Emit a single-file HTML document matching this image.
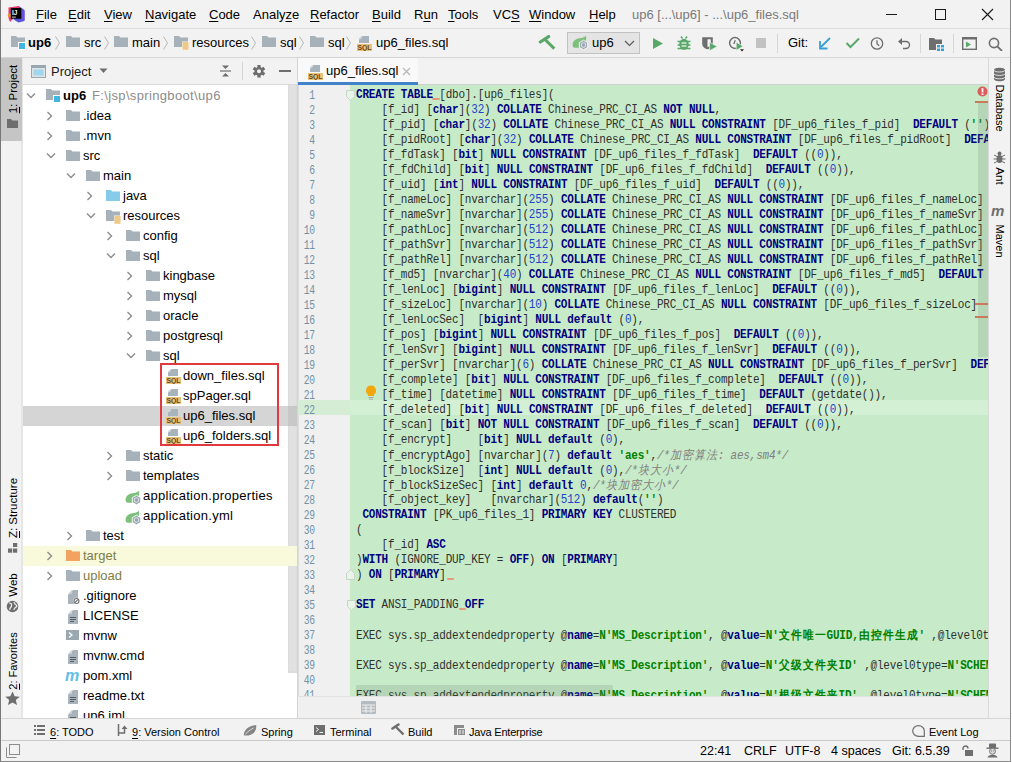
<!DOCTYPE html><html><head><meta charset="utf-8"><style>
*{margin:0;padding:0;box-sizing:border-box}
html,body{width:1012px;height:762px;overflow:hidden;background:#f2f2f2}
body{position:relative;font-family:"Liberation Sans",sans-serif}
.t{position:absolute;white-space:pre;line-height:16px}
.code{position:absolute;left:357px;white-space:pre;font-family:"Liberation Mono",monospace;font-size:11px;letter-spacing:-0.2px;line-height:15px;color:#303030;height:15px;transform:scaleY(1.12);transform-origin:0 11px}
.k{color:#000080;font-weight:bold}
.n{color:#2244cc}
.s{color:#008000;font-weight:bold}
.c{color:#808080;font-style:italic}
.cj{display:inline-block;width:12px;letter-spacing:0;font-family:"Liberation Sans",sans-serif;font-size:11px;text-align:center}
.ln{position:absolute;width:20px;text-align:right;font-family:"Liberation Mono",monospace;font-size:11px;letter-spacing:-0.2px;line-height:15px;color:#7092a6;left:295px;transform:scale(0.88,1.12);transform-origin:100% 11px}
u{text-decoration:underline;text-underline-offset:2px}
</style></head><body>
<div style="position:absolute;left:0px;top:0px;width:1px;height:762px;background:#777777;"></div>
<div style="position:absolute;left:1010px;top:0px;width:1px;height:762px;background:#8a8a8a;"></div>
<div style="position:absolute;left:1011px;top:0px;width:1px;height:762px;background:#ffffff;"></div>
<div style="position:absolute;left:0px;top:761px;width:1011px;height:1px;background:#8a8a8a;"></div>
<svg style="position:absolute;left:7px;top:5px;" width="18" height="18" viewBox="0 0 18 18"><path d="M1.5 2.5L12 1l2.5 4L3 17l-1.5-4z" fill="#e7366a"/><path d="M12.5 1.5L17.5 5v11l-6 1.5-5-3z" fill="#5056db"/><path d="M14 4l3.5 2v9l-3 1z" fill="#6a4fe0"/><circle cx="2.8" cy="10.5" r="2" fill="#f38b30"/><rect x="3.8" y="3" width="10.5" height="10.7" fill="#000"/><text x="5" y="9.8" font-family="Liberation Sans" font-weight="bold" font-size="6.5" fill="#fff">IJ</text><rect x="5" y="11.6" width="3.8" height="1" fill="#cfcfcf"/></svg>
<div class="t" style="left:36px;top:7px;font-size:13px;color:#000;font-weight:normal;"><u>F</u>ile</div>
<div class="t" style="left:68px;top:7px;font-size:13px;color:#000;font-weight:normal;"><u>E</u>dit</div>
<div class="t" style="left:104px;top:7px;font-size:13px;color:#000;font-weight:normal;"><u>V</u>iew</div>
<div class="t" style="left:145px;top:7px;font-size:13px;color:#000;font-weight:normal;"><u>N</u>avigate</div>
<div class="t" style="left:209px;top:7px;font-size:13px;color:#000;font-weight:normal;"><u>C</u>ode</div>
<div class="t" style="left:253px;top:7px;font-size:13px;color:#000;font-weight:normal;">Analy<u>z</u>e</div>
<div class="t" style="left:310px;top:7px;font-size:13px;color:#000;font-weight:normal;"><u>R</u>efactor</div>
<div class="t" style="left:372px;top:7px;font-size:13px;color:#000;font-weight:normal;"><u>B</u>uild</div>
<div class="t" style="left:414px;top:7px;font-size:13px;color:#000;font-weight:normal;">R<u>u</u>n</div>
<div class="t" style="left:448px;top:7px;font-size:13px;color:#000;font-weight:normal;"><u>T</u>ools</div>
<div class="t" style="left:493px;top:7px;font-size:13px;color:#000;font-weight:normal;">VC<u>S</u></div>
<div class="t" style="left:529px;top:7px;font-size:13px;color:#000;font-weight:normal;"><u>W</u>indow</div>
<div class="t" style="left:589px;top:7px;font-size:13px;color:#000;font-weight:normal;"><u>H</u>elp</div>
<div class="t" style="left:632px;top:7px;font-size:13px;color:#7a7a7a;font-weight:normal;">up6 [...\up6] - ...\up6_files.sql</div>
<div style="position:absolute;left:886px;top:14px;width:11px;height:1px;background:#1a1a1a;"></div>
<div style="position:absolute;left:935px;top:9px;width:11px;height:11px;border:1px solid #1a1a1a"></div>
<svg style="position:absolute;left:981px;top:8px;" width="13" height="13" viewBox="0 0 13 13"><path d="M1 1l11 11M12 1L1 12" stroke="#1a1a1a" stroke-width="1.1"/></svg>
<div style="position:absolute;left:1px;top:28px;width:1009px;height:1px;background:#dcdcdc;"></div>
<svg style="position:absolute;left:10px;top:34px;" width="16" height="16" viewBox="0 0 16 16"><path d="M1 2h5l1.5 1.5H15V13H1z" fill="#a7b1b9"/><rect x="8.5" y="8.5" width="7" height="7" fill="#40b6e0" stroke="#fff" stroke-width="1"/></svg>
<div class="t" style="left:28px;top:35px;font-size:13px;color:#000;font-weight:bold;">up6</div>
<svg style="position:absolute;left:53.5px;top:35px;" width="7" height="16" viewBox="0 0 7 16"><path d="M1.5 1.5l4 6.5-4 6.5" stroke="#b8b8b8" stroke-width="1" fill="none"/></svg>
<svg style="position:absolute;left:65px;top:34px;" width="16" height="14" viewBox="0 0 16 14"><path d="M1 2h5l1.5 1.5H15V13H1z" fill="#a7b1b9"/></svg>
<div class="t" style="left:84px;top:35px;font-size:13px;color:#000;font-weight:normal;">src</div>
<svg style="position:absolute;left:102.5px;top:35px;" width="7" height="16" viewBox="0 0 7 16"><path d="M1.5 1.5l4 6.5-4 6.5" stroke="#b8b8b8" stroke-width="1" fill="none"/></svg>
<svg style="position:absolute;left:113px;top:34px;" width="16" height="14" viewBox="0 0 16 14"><path d="M1 2h5l1.5 1.5H15V13H1z" fill="#a7b1b9"/></svg>
<div class="t" style="left:132px;top:35px;font-size:13px;color:#000;font-weight:normal;">main</div>
<svg style="position:absolute;left:161.5px;top:35px;" width="7" height="16" viewBox="0 0 7 16"><path d="M1.5 1.5l4 6.5-4 6.5" stroke="#b8b8b8" stroke-width="1" fill="none"/></svg>
<svg style="position:absolute;left:173px;top:34px;" width="16" height="16" viewBox="0 0 16 16"><path d="M1 2h5l1.5 1.5H15V13H1z" fill="#a7b1b9"/><rect x="9" y="7.5" width="7" height="8.5" fill="#fff" fill-opacity="0.9"/><rect x="9.5" y="8" width="6" height="7.5" fill="#f3dcae"/><path d="M9.5 9h6M9.5 11h6M9.5 13h6M9.5 15h6" stroke="#e6b866" stroke-width="1"/></svg>
<div class="t" style="left:192px;top:35px;font-size:13px;color:#000;font-weight:normal;">resources</div>
<svg style="position:absolute;left:249.5px;top:35px;" width="7" height="16" viewBox="0 0 7 16"><path d="M1.5 1.5l4 6.5-4 6.5" stroke="#b8b8b8" stroke-width="1" fill="none"/></svg>
<svg style="position:absolute;left:261px;top:34px;" width="16" height="14" viewBox="0 0 16 14"><path d="M1 2h5l1.5 1.5H15V13H1z" fill="#a7b1b9"/></svg>
<div class="t" style="left:280px;top:35px;font-size:13px;color:#000;font-weight:normal;">sql</div>
<svg style="position:absolute;left:297.5px;top:35px;" width="7" height="16" viewBox="0 0 7 16"><path d="M1.5 1.5l4 6.5-4 6.5" stroke="#b8b8b8" stroke-width="1" fill="none"/></svg>
<svg style="position:absolute;left:309px;top:34px;" width="16" height="14" viewBox="0 0 16 14"><path d="M1 2h5l1.5 1.5H15V13H1z" fill="#a7b1b9"/></svg>
<div class="t" style="left:328px;top:35px;font-size:13px;color:#000;font-weight:normal;">sql</div>
<svg style="position:absolute;left:344.5px;top:35px;" width="7" height="16" viewBox="0 0 7 16"><path d="M1.5 1.5l4 6.5-4 6.5" stroke="#b8b8b8" stroke-width="1" fill="none"/></svg>
<svg style="position:absolute;left:357px;top:35px;" width="16" height="16" viewBox="0 0 16 16"><path d="M5.5 1H12v7H2V4.5z" fill="#a8b4bd"/><path d="M4.5 1v3H1.5z" fill="#cfd6db"/><rect x="0" y="9" width="15" height="7" fill="#ebc077"/><text x="7.5" y="15.3" font-family="Liberation Sans" font-size="6.8" font-weight="bold" text-anchor="middle" fill="#5e4a22">SQL</text></svg>
<div class="t" style="left:376px;top:35px;font-size:13px;color:#000;font-weight:normal;">up6_files.sql</div>
<svg style="position:absolute;left:538px;top:35px;" width="18" height="16" viewBox="0 0 18 16"><path d="M2.3 7L10.6 1.6" stroke="#59a869" stroke-width="3.2" stroke-linecap="round"/><path d="M7 4.5L16.3 13.6" stroke="#59a869" stroke-width="3"/></svg>
<div style="position:absolute;left:567px;top:32px;width:73px;height:22px;background:#e4e4e4;border:1px solid #c2c2c2"></div>
<svg style="position:absolute;left:572px;top:35px;" width="18" height="16" viewBox="0 0 18 16"><path d="M0.5 9.5C1 5 5 3.5 9 3c2.5-.3 4-1.2 5-2.5.5 3 .3 6-1.5 8L8 12.5c-3 .5-5 .5-7-0.5z" fill="#7cc07c"/><path d="M11.5 5.2l4.2 2.4v4.8l-4.2 2.4-4.2-2.4V7.6z" fill="#9aa7b0" stroke="#fff" stroke-width="0.9"/><circle cx="11.5" cy="10" r="2.3" fill="none" stroke="#e4e8eb" stroke-width="1"/></svg>
<div class="t" style="left:592px;top:35px;font-size:13px;color:#000;font-weight:normal;">up6</div>
<svg style="position:absolute;left:624px;top:40px;" width="11" height="7" viewBox="0 0 11 7"><path d="M1 1l4.5 4.5L10 1" stroke="#555" stroke-width="1.1" fill="none"/></svg>
<svg style="position:absolute;left:652px;top:37px;" width="12" height="13" viewBox="0 0 12 13"><path d="M1 1l10 5.5L1 12z" fill="#59a869"/></svg>
<svg style="position:absolute;left:677px;top:36px;" width="14" height="15" viewBox="0 0 14 15"><path d="M4 0.5l1.5 2M10 0.5L8.5 2.5M0.5 5.5h13M0.5 9h13M0.5 12.5h13" stroke="#59a869" stroke-width="1.5"/><ellipse cx="7" cy="8.3" rx="4.8" ry="5.5" fill="#59a869"/><path d="M4.5 7h5M4.5 10h5" stroke="#d8ecd8" stroke-width="1.5"/></svg>
<svg style="position:absolute;left:701px;top:36px;" width="18" height="16" viewBox="0 0 18 16"><path d="M1.2 1.2h10.6v6.3c0 3.2-2.3 4.9-5.3 5.8-3-0.9-5.3-2.6-5.3-5.8z" fill="#6e6e6e"/><path d="M6.5 3.2h3.3v4.5c0 1.2-.7 2.6-3.3 3.6z" fill="#f2f2f2"/><path d="M8.6 6.2l7.6 4.3-7.6 4.3z" fill="#59a869" stroke="#f2f2f2" stroke-width="0.7"/></svg>
<svg style="position:absolute;left:728px;top:36px;" width="17" height="17" viewBox="0 0 17 17"><circle cx="7" cy="7" r="5.4" fill="none" stroke="#6e6e6e" stroke-width="1.5"/><path d="M7.3 4.2L5.8 8" stroke="#6e6e6e" stroke-width="1.3"/><path d="M8.2 6.2l7 4-7 4.2z" fill="#59a869" stroke="#f2f2f2" stroke-width="0.7"/><path d="M12 13.2h4l-2 2.3z" fill="#222"/></svg>
<div style="position:absolute;left:756px;top:38px;width:10px;height:10px;background:#c2c2c2;"></div>
<div style="position:absolute;left:777px;top:34px;width:1px;height:19px;background:#d6d6d6;"></div>
<div class="t" style="left:788px;top:35px;font-size:13px;color:#000;font-weight:normal;">Git:</div>
<svg style="position:absolute;left:818px;top:36px;" width="14" height="14" viewBox="0 0 14 14"><path d="M12 2L3 11" stroke="#389fd6" stroke-width="1.8"/><path d="M2 5v7.5h7.5" stroke="#389fd6" stroke-width="1.8" fill="none"/></svg>
<svg style="position:absolute;left:845px;top:37px;" width="15" height="12" viewBox="0 0 15 12"><path d="M1.5 6l4 4L14 1.5" stroke="#59a869" stroke-width="2" fill="none"/></svg>
<svg style="position:absolute;left:870px;top:37px;" width="15" height="13" viewBox="0 0 15 13"><circle cx="7" cy="6.5" r="5.7" fill="none" stroke="#6e6e6e" stroke-width="1.3"/><path d="M7 3.3v3.5l2.2 2" stroke="#6e6e6e" stroke-width="1.3" fill="none"/></svg>
<svg style="position:absolute;left:897px;top:37px;" width="15" height="13" viewBox="0 0 15 13"><path d="M3 4.5h6a3.5 3.5 0 0 1 0 7H6" stroke="#6e6e6e" stroke-width="1.4" fill="none"/><path d="M1 4.5L5 1v7z" fill="#6e6e6e"/></svg>
<div style="position:absolute;left:920px;top:34px;width:1px;height:19px;background:#d6d6d6;"></div>
<svg style="position:absolute;left:929px;top:37px;" width="16" height="14" viewBox="0 0 16 14"><path d="M0 1h5l1.5 1.5H13V13H0z" fill="#6e6e6e"/><rect x="7" y="7" width="9" height="7" fill="#f2f2f2"/><rect x="8" y="8" width="3" height="2.5" fill="#389fd6"/><rect x="12" y="8" width="3" height="2.5" fill="#389fd6"/><rect x="8" y="11.5" width="3" height="2.5" fill="#389fd6"/><rect x="12" y="11.5" width="3" height="2.5" fill="#389fd6"/></svg>
<div style="position:absolute;left:953px;top:34px;width:1px;height:19px;background:#d6d6d6;"></div>
<svg style="position:absolute;left:962px;top:37px;" width="15" height="13" viewBox="0 0 15 13"><rect x="0.7" y="0.7" width="13.6" height="11.6" fill="none" stroke="#6e6e6e" stroke-width="1.4"/><rect x="0" y="0" width="15" height="2.5" fill="#6e6e6e"/><path d="M4 4.5l5 3-5 3z" fill="#59a869"/></svg>
<svg style="position:absolute;left:988px;top:37px;" width="15" height="14" viewBox="0 0 15 14"><circle cx="6" cy="6" r="4.6" fill="none" stroke="#6e6e6e" stroke-width="1.6"/><path d="M9.3 9.3L14 14" stroke="#6e6e6e" stroke-width="1.8"/></svg>
<div style="position:absolute;left:1px;top:57px;width:1009px;height:1px;background:#d4d4d4;"></div>
<div style="position:absolute;left:1px;top:58px;width:21px;height:660px;background:#f2f2f2;"></div>
<div style="position:absolute;left:21px;top:58px;width:2px;height:660px;background:#e6e6e6;"></div>
<div style="position:absolute;left:1px;top:58px;width:21px;height:83px;background:#c5c5c5;"></div>
<div style="position:absolute;left:13px;top:89px;width:0;height:0"><div style="position:absolute;left:0;top:0;transform:translate(-50%,-50%) rotate(-90deg);white-space:pre;font-size:11.5px;line-height:14px;color:#000"><u>1</u>: Project</div></div>
<svg style="position:absolute;left:6px;top:118px;" width="13" height="11" viewBox="0 0 13 11"><path d="M1 1h4l1.5 1.5H12V10H1z" fill="#6e6e6e"/></svg>
<div style="position:absolute;left:13px;top:508px;width:0;height:0"><div style="position:absolute;left:0;top:0;transform:translate(-50%,-50%) rotate(-90deg);white-space:pre;font-size:11.5px;line-height:14px;color:#000"><u>Z</u>: Structure</div></div>
<svg style="position:absolute;left:7px;top:542px;" width="11" height="11" viewBox="0 0 11 11"><rect x="6" y="1" width="4.2" height="4" fill="#6e6e6e"/><rect x="1" y="6.5" width="4.2" height="4.2" fill="#6e6e6e"/><rect x="6" y="6.5" width="4.2" height="4.2" fill="#6e6e6e"/></svg>
<div style="position:absolute;left:13px;top:585px;width:0;height:0"><div style="position:absolute;left:0;top:0;transform:translate(-50%,-50%) rotate(-90deg);white-space:pre;font-size:11.5px;line-height:14px;color:#000">Web</div></div>
<svg style="position:absolute;left:6px;top:600px;" width="13" height="13" viewBox="0 0 13 13"><circle cx="6.5" cy="6.5" r="5.8" fill="#6e6e6e"/><path d="M3 3c2 0 3 1 2.5 3S3 8 4 10M8 2c0 2 2 2 3 4-1 2-3 1-3 4" stroke="#f0f0f0" stroke-width="1.2" fill="none"/></svg>
<div style="position:absolute;left:13px;top:661px;width:0;height:0"><div style="position:absolute;left:0;top:0;transform:translate(-50%,-50%) rotate(-90deg);white-space:pre;font-size:11px;line-height:14px;color:#000"><u>2</u>: Favorites</div></div>
<svg style="position:absolute;left:5px;top:691px;" width="15" height="15" viewBox="0 0 15 15"><path d="M7.5 0.5l2.1 4.7 5.1.5-3.9 3.4 1.2 5-4.5-2.7-4.5 2.7 1.2-5L0.3 5.7l5.1-.5z" fill="#6e6e6e"/></svg>
<div style="position:absolute;left:23px;top:58px;width:274px;height:26px;background:#f2f2f2;"></div>
<div style="position:absolute;left:23px;top:84px;width:274px;height:1px;background:#dadada;"></div>
<svg style="position:absolute;left:31px;top:65px;" width="15" height="13" viewBox="0 0 15 13"><rect x="0.5" y="0.5" width="14" height="12" fill="#dfe3e6" stroke="#9aa7b0"/><rect x="0.5" y="0.5" width="14" height="2.5" fill="#9aa7b0"/><rect x="2.5" y="4.5" width="10" height="6" fill="#9fd7ee"/></svg>
<div class="t" style="left:51px;top:64px;font-size:13px;color:#1a1a1a;font-weight:normal;">Project</div>
<svg style="position:absolute;left:99px;top:68px;" width="9" height="6" viewBox="0 0 9 6"><path d="M0.5 0.5h8L4.5 5z" fill="#6e6e6e"/></svg>
<svg style="position:absolute;left:219px;top:64px;" width="13" height="14" viewBox="0 0 13 14"><path d="M1 7h11" stroke="#6e6e6e" stroke-width="1.2"/><path d="M3 1.5h7L6.5 5z M3 12.5h7L6.5 9z" fill="#6e6e6e"/></svg>
<div style="position:absolute;left:242px;top:62px;width:1px;height:18px;background:#d6d6d6;"></div>
<svg style="position:absolute;left:252px;top:64px;" width="14" height="14" viewBox="0 0 14 14"><g transform="translate(7 7.3)"><circle r="4.4" fill="#6e6e6e"/><rect x="-1.6" y="-6.3" width="3.2" height="3" fill="#6e6e6e" transform="rotate(0)"/><rect x="-1.6" y="-6.3" width="3.2" height="3" fill="#6e6e6e" transform="rotate(60)"/><rect x="-1.6" y="-6.3" width="3.2" height="3" fill="#6e6e6e" transform="rotate(120)"/><rect x="-1.6" y="-6.3" width="3.2" height="3" fill="#6e6e6e" transform="rotate(180)"/><rect x="-1.6" y="-6.3" width="3.2" height="3" fill="#6e6e6e" transform="rotate(240)"/><rect x="-1.6" y="-6.3" width="3.2" height="3" fill="#6e6e6e" transform="rotate(300)"/><circle r="2" fill="#f2f2f2"/></g></svg>
<div style="position:absolute;left:279px;top:70px;width:12px;height:2px;background:#6e6e6e;"></div>
<div style="position:absolute;left:23px;top:85px;width:274px;height:633px;background:#ffffff;"></div>
<div style="position:absolute;left:288px;top:85px;width:9px;height:588px;background:#dcdcdc;"></div>
<div style="position:absolute;left:289px;top:85px;width:7px;height:586px;background:#e1e1e1;"></div>
<div style="position:absolute;left:297px;top:58px;width:1px;height:660px;background:#d4d4d4;"></div>
<div style="position:absolute;left:23px;top:406px;width:265px;height:20px;background:#d5d5d5;"></div>
<div style="position:absolute;left:288px;top:406px;width:9px;height:20px;background:#c8c8c8;"></div>
<div style="position:absolute;left:23px;top:546px;width:274px;height:20px;background:#f9f9dc;"></div>
<div style="position:absolute;left:23px;top:85px;width:265px;height:633px;overflow:hidden">
<svg style="position:absolute;left:2px;top:6px;" width="12" height="10" viewBox="0 0 12 10"><path d="M2 2.5l4 4 4-4" stroke="#8c8c8c" stroke-width="1.4" fill="none"/></svg>
<svg style="position:absolute;left:22px;top:2px;" width="16" height="16" viewBox="0 0 16 16"><path d="M1 2h5l1.5 1.5H15V13H1z" fill="#a7b1b9"/><rect x="8.5" y="8.5" width="7" height="7" fill="#40b6e0" stroke="#fff" stroke-width="1"/></svg>
<div class="t" style="left:40px;top:3px;font-size:13px;color:#000;font-weight:bold;">up6</div>
<div class="t" style="left:69px;top:3px;font-size:13px;color:#8c8c8c;font-weight:normal;letter-spacing:0.35px">F:\jsp\springboot\up6</div>
<svg style="position:absolute;left:22px;top:25px;" width="10" height="12" viewBox="0 0 10 12"><path d="M2.5 2l4 4-4 4" stroke="#8c8c8c" stroke-width="1.4" fill="none"/></svg>
<svg style="position:absolute;left:42px;top:23px;" width="16" height="14" viewBox="0 0 16 14"><path d="M1 2h5l1.5 1.5H15V13H1z" fill="#a7b1b9"/></svg>
<div class="t" style="left:60px;top:23px;font-size:13px;color:#000;font-weight:normal;">.idea</div>
<svg style="position:absolute;left:22px;top:45px;" width="10" height="12" viewBox="0 0 10 12"><path d="M2.5 2l4 4-4 4" stroke="#8c8c8c" stroke-width="1.4" fill="none"/></svg>
<svg style="position:absolute;left:42px;top:43px;" width="16" height="14" viewBox="0 0 16 14"><path d="M1 2h5l1.5 1.5H15V13H1z" fill="#a7b1b9"/></svg>
<div class="t" style="left:60px;top:43px;font-size:13px;color:#000;font-weight:normal;">.mvn</div>
<svg style="position:absolute;left:22px;top:66px;" width="12" height="10" viewBox="0 0 12 10"><path d="M2 2.5l4 4 4-4" stroke="#8c8c8c" stroke-width="1.4" fill="none"/></svg>
<svg style="position:absolute;left:42px;top:63px;" width="16" height="14" viewBox="0 0 16 14"><path d="M1 2h5l1.5 1.5H15V13H1z" fill="#a7b1b9"/></svg>
<div class="t" style="left:60px;top:63px;font-size:13px;color:#000;font-weight:normal;">src</div>
<svg style="position:absolute;left:42px;top:86px;" width="12" height="10" viewBox="0 0 12 10"><path d="M2 2.5l4 4 4-4" stroke="#8c8c8c" stroke-width="1.4" fill="none"/></svg>
<svg style="position:absolute;left:62px;top:83px;" width="16" height="14" viewBox="0 0 16 14"><path d="M1 2h5l1.5 1.5H15V13H1z" fill="#a7b1b9"/></svg>
<div class="t" style="left:80px;top:83px;font-size:13px;color:#000;font-weight:normal;">main</div>
<svg style="position:absolute;left:62px;top:105px;" width="10" height="12" viewBox="0 0 10 12"><path d="M2.5 2l4 4-4 4" stroke="#8c8c8c" stroke-width="1.4" fill="none"/></svg>
<svg style="position:absolute;left:82px;top:103px;" width="16" height="14" viewBox="0 0 16 14"><path d="M1 2h5l1.5 1.5H15V13H1z" fill="#86cbe9"/></svg>
<div class="t" style="left:100px;top:103px;font-size:13px;color:#000;font-weight:normal;">java</div>
<svg style="position:absolute;left:62px;top:126px;" width="12" height="10" viewBox="0 0 12 10"><path d="M2 2.5l4 4 4-4" stroke="#8c8c8c" stroke-width="1.4" fill="none"/></svg>
<svg style="position:absolute;left:82px;top:123px;" width="16" height="16" viewBox="0 0 16 16"><path d="M1 2h5l1.5 1.5H15V13H1z" fill="#a7b1b9"/><rect x="9" y="7.5" width="7" height="8.5" fill="#fff" fill-opacity="0.9"/><rect x="9.5" y="8" width="6" height="7.5" fill="#f3dcae"/><path d="M9.5 9h6M9.5 11h6M9.5 13h6M9.5 15h6" stroke="#e6b866" stroke-width="1"/></svg>
<div class="t" style="left:100px;top:123px;font-size:13px;color:#000;font-weight:normal;">resources</div>
<svg style="position:absolute;left:82px;top:145px;" width="10" height="12" viewBox="0 0 10 12"><path d="M2.5 2l4 4-4 4" stroke="#8c8c8c" stroke-width="1.4" fill="none"/></svg>
<svg style="position:absolute;left:102px;top:143px;" width="16" height="14" viewBox="0 0 16 14"><path d="M1 2h5l1.5 1.5H15V13H1z" fill="#a7b1b9"/></svg>
<div class="t" style="left:120px;top:143px;font-size:13px;color:#000;font-weight:normal;">config</div>
<svg style="position:absolute;left:82px;top:166px;" width="12" height="10" viewBox="0 0 12 10"><path d="M2 2.5l4 4 4-4" stroke="#8c8c8c" stroke-width="1.4" fill="none"/></svg>
<svg style="position:absolute;left:102px;top:163px;" width="16" height="14" viewBox="0 0 16 14"><path d="M1 2h5l1.5 1.5H15V13H1z" fill="#a7b1b9"/></svg>
<div class="t" style="left:120px;top:163px;font-size:13px;color:#000;font-weight:normal;">sql</div>
<svg style="position:absolute;left:102px;top:185px;" width="10" height="12" viewBox="0 0 10 12"><path d="M2.5 2l4 4-4 4" stroke="#8c8c8c" stroke-width="1.4" fill="none"/></svg>
<svg style="position:absolute;left:122px;top:183px;" width="16" height="14" viewBox="0 0 16 14"><path d="M1 2h5l1.5 1.5H15V13H1z" fill="#a7b1b9"/></svg>
<div class="t" style="left:140px;top:183px;font-size:13px;color:#000;font-weight:normal;">kingbase</div>
<svg style="position:absolute;left:102px;top:205px;" width="10" height="12" viewBox="0 0 10 12"><path d="M2.5 2l4 4-4 4" stroke="#8c8c8c" stroke-width="1.4" fill="none"/></svg>
<svg style="position:absolute;left:122px;top:203px;" width="16" height="14" viewBox="0 0 16 14"><path d="M1 2h5l1.5 1.5H15V13H1z" fill="#a7b1b9"/></svg>
<div class="t" style="left:140px;top:203px;font-size:13px;color:#000;font-weight:normal;">mysql</div>
<svg style="position:absolute;left:102px;top:225px;" width="10" height="12" viewBox="0 0 10 12"><path d="M2.5 2l4 4-4 4" stroke="#8c8c8c" stroke-width="1.4" fill="none"/></svg>
<svg style="position:absolute;left:122px;top:223px;" width="16" height="14" viewBox="0 0 16 14"><path d="M1 2h5l1.5 1.5H15V13H1z" fill="#a7b1b9"/></svg>
<div class="t" style="left:140px;top:223px;font-size:13px;color:#000;font-weight:normal;">oracle</div>
<svg style="position:absolute;left:102px;top:245px;" width="10" height="12" viewBox="0 0 10 12"><path d="M2.5 2l4 4-4 4" stroke="#8c8c8c" stroke-width="1.4" fill="none"/></svg>
<svg style="position:absolute;left:122px;top:243px;" width="16" height="14" viewBox="0 0 16 14"><path d="M1 2h5l1.5 1.5H15V13H1z" fill="#a7b1b9"/></svg>
<div class="t" style="left:140px;top:243px;font-size:13px;color:#000;font-weight:normal;">postgresql</div>
<svg style="position:absolute;left:102px;top:266px;" width="12" height="10" viewBox="0 0 12 10"><path d="M2 2.5l4 4 4-4" stroke="#8c8c8c" stroke-width="1.4" fill="none"/></svg>
<svg style="position:absolute;left:122px;top:263px;" width="16" height="14" viewBox="0 0 16 14"><path d="M1 2h5l1.5 1.5H15V13H1z" fill="#a7b1b9"/></svg>
<div class="t" style="left:140px;top:263px;font-size:13px;color:#000;font-weight:normal;">sql</div>
<svg style="position:absolute;left:143px;top:283px;" width="16" height="16" viewBox="0 0 16 16"><path d="M5.5 1H12v7H2V4.5z" fill="#a8b4bd"/><path d="M4.5 1v3H1.5z" fill="#cfd6db"/><rect x="0" y="9" width="15" height="7" fill="#ebc077"/><text x="7.5" y="15.3" font-family="Liberation Sans" font-size="6.8" font-weight="bold" text-anchor="middle" fill="#5e4a22">SQL</text></svg>
<div class="t" style="left:160px;top:283px;font-size:13px;color:#000;font-weight:normal;">down_files.sql</div>
<svg style="position:absolute;left:143px;top:303px;" width="16" height="16" viewBox="0 0 16 16"><path d="M5.5 1H12v7H2V4.5z" fill="#a8b4bd"/><path d="M4.5 1v3H1.5z" fill="#cfd6db"/><rect x="0" y="9" width="15" height="7" fill="#ebc077"/><text x="7.5" y="15.3" font-family="Liberation Sans" font-size="6.8" font-weight="bold" text-anchor="middle" fill="#5e4a22">SQL</text></svg>
<div class="t" style="left:160px;top:303px;font-size:13px;color:#000;font-weight:normal;">spPager.sql</div>
<svg style="position:absolute;left:143px;top:323px;" width="16" height="16" viewBox="0 0 16 16"><path d="M5.5 1H12v7H2V4.5z" fill="#a8b4bd"/><path d="M4.5 1v3H1.5z" fill="#cfd6db"/><rect x="0" y="9" width="15" height="7" fill="#ebc077"/><text x="7.5" y="15.3" font-family="Liberation Sans" font-size="6.8" font-weight="bold" text-anchor="middle" fill="#5e4a22">SQL</text></svg>
<div class="t" style="left:160px;top:323px;font-size:13px;color:#000;font-weight:normal;">up6_files.sql</div>
<svg style="position:absolute;left:143px;top:343px;" width="16" height="16" viewBox="0 0 16 16"><path d="M5.5 1H12v7H2V4.5z" fill="#a8b4bd"/><path d="M4.5 1v3H1.5z" fill="#cfd6db"/><rect x="0" y="9" width="15" height="7" fill="#ebc077"/><text x="7.5" y="15.3" font-family="Liberation Sans" font-size="6.8" font-weight="bold" text-anchor="middle" fill="#5e4a22">SQL</text></svg>
<div class="t" style="left:160px;top:343px;font-size:13px;color:#000;font-weight:normal;">up6_folders.sql</div>
<svg style="position:absolute;left:82px;top:365px;" width="10" height="12" viewBox="0 0 10 12"><path d="M2.5 2l4 4-4 4" stroke="#8c8c8c" stroke-width="1.4" fill="none"/></svg>
<svg style="position:absolute;left:102px;top:363px;" width="16" height="14" viewBox="0 0 16 14"><path d="M1 2h5l1.5 1.5H15V13H1z" fill="#a7b1b9"/></svg>
<div class="t" style="left:120px;top:363px;font-size:13px;color:#000;font-weight:normal;">static</div>
<svg style="position:absolute;left:82px;top:385px;" width="10" height="12" viewBox="0 0 10 12"><path d="M2.5 2l4 4-4 4" stroke="#8c8c8c" stroke-width="1.4" fill="none"/></svg>
<svg style="position:absolute;left:102px;top:383px;" width="16" height="14" viewBox="0 0 16 14"><path d="M1 2h5l1.5 1.5H15V13H1z" fill="#a7b1b9"/></svg>
<div class="t" style="left:120px;top:383px;font-size:13px;color:#000;font-weight:normal;">templates</div>
<svg style="position:absolute;left:102px;top:405px;" width="18" height="16" viewBox="0 0 18 16"><path d="M0.5 9.5C1 5 5 3.5 9 3c2.5-.3 4-1.2 5-2.5.5 3 .3 6-1.5 8L8 12.5c-3 .5-5 .5-7-0.5z" fill="#7cc07c"/><path d="M11.5 5.2l4.2 2.4v4.8l-4.2 2.4-4.2-2.4V7.6z" fill="#9aa7b0" stroke="#fff" stroke-width="0.9"/><circle cx="11.5" cy="10" r="2.3" fill="none" stroke="#e4e8eb" stroke-width="1"/></svg>
<div class="t" style="left:120px;top:403px;font-size:13px;color:#000;font-weight:normal;letter-spacing:0.28px">application.properties</div>
<svg style="position:absolute;left:102px;top:425px;" width="18" height="16" viewBox="0 0 18 16"><path d="M0.5 9.5C1 5 5 3.5 9 3c2.5-.3 4-1.2 5-2.5.5 3 .3 6-1.5 8L8 12.5c-3 .5-5 .5-7-0.5z" fill="#7cc07c"/><path d="M11.5 5.2l4.2 2.4v4.8l-4.2 2.4-4.2-2.4V7.6z" fill="#9aa7b0" stroke="#fff" stroke-width="0.9"/><circle cx="11.5" cy="10" r="2.3" fill="none" stroke="#e4e8eb" stroke-width="1"/></svg>
<div class="t" style="left:120px;top:423px;font-size:13px;color:#000;font-weight:normal;letter-spacing:0.28px">application.yml</div>
<svg style="position:absolute;left:42px;top:445px;" width="10" height="12" viewBox="0 0 10 12"><path d="M2.5 2l4 4-4 4" stroke="#8c8c8c" stroke-width="1.4" fill="none"/></svg>
<svg style="position:absolute;left:62px;top:443px;" width="16" height="14" viewBox="0 0 16 14"><path d="M1 2h5l1.5 1.5H15V13H1z" fill="#a7b1b9"/></svg>
<div class="t" style="left:80px;top:443px;font-size:13px;color:#000;font-weight:normal;">test</div>
<svg style="position:absolute;left:22px;top:465px;" width="10" height="12" viewBox="0 0 10 12"><path d="M2.5 2l4 4-4 4" stroke="#8c8c8c" stroke-width="1.4" fill="none"/></svg>
<svg style="position:absolute;left:42px;top:463px;" width="16" height="14" viewBox="0 0 16 14"><path d="M1 2h5l1.5 1.5H15V13H1z" fill="#f4a261"/></svg>
<div class="t" style="left:60px;top:463px;font-size:13px;color:#7d7d47;font-weight:normal;">target</div>
<svg style="position:absolute;left:22px;top:485px;" width="10" height="12" viewBox="0 0 10 12"><path d="M2.5 2l4 4-4 4" stroke="#8c8c8c" stroke-width="1.4" fill="none"/></svg>
<svg style="position:absolute;left:42px;top:483px;" width="16" height="14" viewBox="0 0 16 14"><path d="M1 2h5l1.5 1.5H15V13H1z" fill="#a7b1b9"/></svg>
<div class="t" style="left:60px;top:483px;font-size:13px;color:#7d7d47;font-weight:normal;">upload</div>
<svg style="position:absolute;left:43px;top:504px;" width="16" height="16" viewBox="0 0 16 16"><path d="M7 1h5v14H2V6z" fill="#a8b3bb"/><path d="M6 1v4H2z" fill="#c9d0d5"/><circle cx="10.5" cy="12" r="3.3" fill="#fff"/><circle cx="10.5" cy="12" r="2.5" fill="#fff" stroke="#6e6e6e" stroke-width="1.1"/><path d="M8.8 13.7l3.4-3.4" stroke="#6e6e6e" stroke-width="1.1"/></svg>
<div class="t" style="left:60px;top:503px;font-size:13px;color:#000;font-weight:normal;">.gitignore</div>
<svg style="position:absolute;left:43px;top:524px;" width="16" height="16" viewBox="0 0 16 16"><path d="M7 1h5v14H2V6z" fill="#a8b3bb"/><path d="M6 1v4H2z" fill="#c9d0d5"/><path d="M4 8.5h6M4 10.5h6M4 12.5h4" stroke="#555f66" stroke-width="1"/></svg>
<div class="t" style="left:60px;top:523px;font-size:13px;color:#000;font-weight:normal;">LICENSE</div>
<svg style="position:absolute;left:42px;top:542px;" width="16" height="16" viewBox="0 0 16 16"><rect x="1" y="3" width="13" height="10" fill="#9aa7b0"/><path d="M4 5.5l3 2.5-3 2.5" stroke="#fff" stroke-width="1.3" fill="none"/></svg>
<div class="t" style="left:60px;top:543px;font-size:13px;color:#000;font-weight:normal;">mvnw</div>
<svg style="position:absolute;left:43px;top:564px;" width="16" height="16" viewBox="0 0 16 16"><path d="M7 1h5v14H2V6z" fill="#a8b3bb"/><path d="M6 1v4H2z" fill="#c9d0d5"/><path d="M4 8.5h6M4 10.5h6M4 12.5h4" stroke="#555f66" stroke-width="1"/></svg>
<div class="t" style="left:60px;top:563px;font-size:13px;color:#000;font-weight:normal;">mvnw.cmd</div>
<svg style="position:absolute;left:42px;top:583px;" width="18" height="16" viewBox="0 0 18 16"><text x="0" y="13" font-family="Liberation Sans" font-size="16" font-style="italic" font-weight="bold" fill="#62c0e6">m</text></svg>
<div class="t" style="left:60px;top:583px;font-size:13px;color:#000;font-weight:normal;">pom.xml</div>
<svg style="position:absolute;left:43px;top:604px;" width="16" height="16" viewBox="0 0 16 16"><path d="M7 1h5v14H2V6z" fill="#a8b3bb"/><path d="M6 1v4H2z" fill="#c9d0d5"/><path d="M4 8.5h6M4 10.5h6M4 12.5h4" stroke="#555f66" stroke-width="1"/></svg>
<div class="t" style="left:60px;top:603px;font-size:13px;color:#000;font-weight:normal;">readme.txt</div>
<svg style="position:absolute;left:43px;top:624px;" width="16" height="16" viewBox="0 0 16 16"><path d="M7 1h5v14H2V6z" fill="#a8b3bb"/><path d="M6 1v4H2z" fill="#c9d0d5"/><path d="M4 8.5h6M4 10.5h6M4 12.5h4" stroke="#555f66" stroke-width="1"/></svg>
<div class="t" style="left:60px;top:623px;font-size:13px;color:#000;font-weight:normal;">up6.iml</div>
</div>
<div style="position:absolute;left:160px;top:363px;width:119px;height:83px;border:2px solid #e0393e"></div>
<div style="position:absolute;left:298px;top:58px;width:691px;height:27px;background:#f2f2f2;"></div>
<div style="position:absolute;left:298px;top:58px;width:120px;height:24px;background:#f9f9f9;"></div>
<div style="position:absolute;left:298px;top:82px;width:120px;height:3px;background:#4083c9;"></div>
<svg style="position:absolute;left:308px;top:64px;" width="16" height="16" viewBox="0 0 16 16"><path d="M5.5 1H12v7H2V4.5z" fill="#a8b4bd"/><path d="M4.5 1v3H1.5z" fill="#cfd6db"/><rect x="0" y="9" width="15" height="7" fill="#ebc077"/><text x="7.5" y="15.3" font-family="Liberation Sans" font-size="6.8" font-weight="bold" text-anchor="middle" fill="#5e4a22">SQL</text></svg>
<div class="t" style="left:326px;top:63px;font-size:13px;color:#000;font-weight:normal;">up6_files.sql</div>
<svg style="position:absolute;left:402px;top:67px;" width="9" height="9" viewBox="0 0 9 9"><path d="M1 1l7 7M8 1L1 8" stroke="#b5b5b5" stroke-width="1.1"/></svg>
<div style="position:absolute;left:418px;top:84px;width:571px;height:1px;background:#d0d0d0;"></div>
<div style="position:absolute;left:298px;top:85px;width:52px;height:611px;background:#f0f0f0;"></div>
<div style="position:absolute;left:298px;top:85px;width:1px;height:611px;background:#dcdcdc;"></div>
<div style="position:absolute;left:350px;top:85px;width:639px;height:611px;background:#c7ebc8;"></div>
<div style="position:absolute;left:298px;top:400px;width:52px;height:15px;background:#d5ecd5;"></div>
<div style="position:absolute;left:350px;top:400px;width:639px;height:15px;background:#d3f0d4;"></div>
<div style="position:absolute;left:298px;top:85px;width:691px;height:611px;overflow:hidden">
<div class="ln" style="top:4px;left:-3px">1</div>
<div class="ln" style="top:19px;left:-3px">2</div>
<div class="ln" style="top:34px;left:-3px">3</div>
<div class="ln" style="top:49px;left:-3px">4</div>
<div class="ln" style="top:64px;left:-3px">5</div>
<div class="ln" style="top:79px;left:-3px">6</div>
<div class="ln" style="top:94px;left:-3px">7</div>
<div class="ln" style="top:109px;left:-3px">8</div>
<div class="ln" style="top:124px;left:-3px">9</div>
<div class="ln" style="top:139px;left:-3px">10</div>
<div class="ln" style="top:154px;left:-3px">11</div>
<div class="ln" style="top:169px;left:-3px">12</div>
<div class="ln" style="top:184px;left:-3px">13</div>
<div class="ln" style="top:199px;left:-3px">14</div>
<div class="ln" style="top:214px;left:-3px">15</div>
<div class="ln" style="top:229px;left:-3px">16</div>
<div class="ln" style="top:244px;left:-3px">17</div>
<div class="ln" style="top:259px;left:-3px">18</div>
<div class="ln" style="top:274px;left:-3px">19</div>
<div class="ln" style="top:289px;left:-3px">20</div>
<div class="ln" style="top:304px;left:-3px">21</div>
<div class="ln" style="top:319px;left:-3px">22</div>
<div class="ln" style="top:334px;left:-3px">23</div>
<div class="ln" style="top:349px;left:-3px">24</div>
<div class="ln" style="top:364px;left:-3px">25</div>
<div class="ln" style="top:379px;left:-3px">26</div>
<div class="ln" style="top:394px;left:-3px">27</div>
<div class="ln" style="top:409px;left:-3px">28</div>
<div class="ln" style="top:424px;left:-3px">29</div>
<div class="ln" style="top:439px;left:-3px">30</div>
<div class="ln" style="top:454px;left:-3px">31</div>
<div class="ln" style="top:469px;left:-3px">32</div>
<div class="ln" style="top:484px;left:-3px">33</div>
<div class="ln" style="top:499px;left:-3px">34</div>
<div class="ln" style="top:514px;left:-3px">35</div>
<div class="ln" style="top:529px;left:-3px">36</div>
<div class="ln" style="top:544px;left:-3px">37</div>
<div class="ln" style="top:559px;left:-3px">38</div>
<div class="ln" style="top:574px;left:-3px">39</div>
<div class="ln" style="top:589px;left:-3px">40</div>
<div class="ln" style="top:604px;left:-3px">41</div>
<div style="position:absolute;left:52px;top:0;width:639px;height:611px;overflow:hidden">
<div class="code" style="top:2.6px;left:6px"><span class="k">CREATE</span> <span class="k">TABLE</span> [dbo].[up6_files](</div>
<div class="code" style="top:17.6px;left:6px">    [f_id] [<span class="k">char</span>](<span class="n">32</span>) <span class="k">COLLATE</span> Chinese_PRC_CI_AS <span class="k">NOT</span> <span class="k">NULL</span>,</div>
<div class="code" style="top:32.6px;left:6px">    [f_pid] [<span class="k">char</span>](<span class="n">32</span>) <span class="k">COLLATE</span> Chinese_PRC_CI_AS <span class="k">NULL</span> <span class="k">CONSTRAINT</span> [DF_up6_files_f_pid]  <span class="k">DEFAULT</span> (<span class="s">''</span>),</div>
<div class="code" style="top:47.6px;left:6px">    [f_pidRoot] [<span class="k">char</span>](<span class="n">32</span>) <span class="k">COLLATE</span> Chinese_PRC_CI_AS <span class="k">NULL</span> <span class="k">CONSTRAINT</span> [DF_up6_files_f_pidRoot]  <span class="k">DEFAULT</span> (<span class="s">''</span>),</div>
<div class="code" style="top:62.6px;left:6px">    [f_fdTask] [<span class="k">bit</span>] <span class="k">NULL</span> <span class="k">CONSTRAINT</span> [DF_up6_files_f_fdTask]  <span class="k">DEFAULT</span> ((<span class="n">0</span>)),</div>
<div class="code" style="top:77.6px;left:6px">    [f_fdChild] [<span class="k">bit</span>] <span class="k">NULL</span> <span class="k">CONSTRAINT</span> [DF_up6_files_f_fdChild]  <span class="k">DEFAULT</span> ((<span class="n">0</span>)),</div>
<div class="code" style="top:92.6px;left:6px">    [f_uid] [<span class="k">int</span>] <span class="k">NULL</span> <span class="k">CONSTRAINT</span> [DF_up6_files_f_uid]  <span class="k">DEFAULT</span> ((<span class="n">0</span>)),</div>
<div class="code" style="top:107.6px;left:6px">    [f_nameLoc] [nvarchar](<span class="n">255</span>) <span class="k">COLLATE</span> Chinese_PRC_CI_AS <span class="k">NULL</span> <span class="k">CONSTRAINT</span> [DF_up6_files_f_nameLoc]  <span class="k">DEFAULT</span> (<span class="s">''</span>)</div>
<div class="code" style="top:122.6px;left:6px">    [f_nameSvr] [nvarchar](<span class="n">255</span>) <span class="k">COLLATE</span> Chinese_PRC_CI_AS <span class="k">NULL</span> <span class="k">CONSTRAINT</span> [DF_up6_files_f_nameSvr]  <span class="k">DEFAULT</span> (<span class="s">''</span>)</div>
<div class="code" style="top:137.6px;left:6px">    [f_pathLoc] [nvarchar](<span class="n">512</span>) <span class="k">COLLATE</span> Chinese_PRC_CI_AS <span class="k">NULL</span> <span class="k">CONSTRAINT</span> [DF_up6_files_f_pathLoc]  <span class="k">DEFAULT</span> (<span class="s">''</span>)</div>
<div class="code" style="top:152.6px;left:6px">    [f_pathSvr] [nvarchar](<span class="n">512</span>) <span class="k">COLLATE</span> Chinese_PRC_CI_AS <span class="k">NULL</span> <span class="k">CONSTRAINT</span> [DF_up6_files_f_pathSvr]  <span class="k">DEFAULT</span> (<span class="s">''</span>)</div>
<div class="code" style="top:167.6px;left:6px">    [f_pathRel] [nvarchar](<span class="n">512</span>) <span class="k">COLLATE</span> Chinese_PRC_CI_AS <span class="k">NULL</span> <span class="k">CONSTRAINT</span> [DF_up6_files_f_pathRel]  <span class="k">DEFAULT</span> (<span class="s">''</span>)</div>
<div class="code" style="top:182.6px;left:6px">    [f_md5] [nvarchar](<span class="n">40</span>) <span class="k">COLLATE</span> Chinese_PRC_CI_AS <span class="k">NULL</span> <span class="k">CONSTRAINT</span> [DF_up6_files_f_md5]  <span class="k">DEFAULT</span> (<span class="s">''</span>)</div>
<div class="code" style="top:197.6px;left:6px">    [f_lenLoc] [<span class="k">bigint</span>] <span class="k">NULL</span> <span class="k">CONSTRAINT</span> [DF_up6_files_f_lenLoc]  <span class="k">DEFAULT</span> ((<span class="n">0</span>)),</div>
<div class="code" style="top:212.6px;left:6px">    [f_sizeLoc] [nvarchar](<span class="n">10</span>) <span class="k">COLLATE</span> Chinese_PRC_CI_AS <span class="k">NULL</span> <span class="k">CONSTRAINT</span> [DF_up6_files_f_sizeLoc]  <span class="k">DEFAULT</span> (<span class="s">'0'</span>)</div>
<div class="code" style="top:227.6px;left:6px">    [f_lenLocSec]  [<span class="k">bigint</span>] <span class="k">NULL</span> <span class="k">default</span> (<span class="n">0</span>),</div>
<div class="code" style="top:242.6px;left:6px">    [f_pos] [<span class="k">bigint</span>] <span class="k">NULL</span> <span class="k">CONSTRAINT</span> [DF_up6_files_f_pos]  <span class="k">DEFAULT</span> ((<span class="n">0</span>)),</div>
<div class="code" style="top:257.6px;left:6px">    [f_lenSvr] [<span class="k">bigint</span>] <span class="k">NULL</span> <span class="k">CONSTRAINT</span> [DF_up6_files_f_lenSvr]  <span class="k">DEFAULT</span> ((<span class="n">0</span>)),</div>
<div class="code" style="top:272.6px;left:6px">    [f_perSvr] [nvarchar](<span class="n">6</span>) <span class="k">COLLATE</span> Chinese_PRC_CI_AS <span class="k">NULL</span> <span class="k">CONSTRAINT</span> [DF_up6_files_f_perSvr]  <span class="k">DEFAULT</span> (<span class="s">'0%'</span>)</div>
<div class="code" style="top:287.6px;left:6px">    [f_complete] [<span class="k">bit</span>] <span class="k">NULL</span> <span class="k">CONSTRAINT</span> [DF_up6_files_f_complete]  <span class="k">DEFAULT</span> ((<span class="n">0</span>)),</div>
<div class="code" style="top:302.6px;left:6px">    [f_time] [datetime] <span class="k">NULL</span> <span class="k">CONSTRAINT</span> [DF_up6_files_f_time]  <span class="k">DEFAULT</span> (getdate()),</div>
<div class="code" style="top:317.6px;left:6px">    [f_deleted] [<span class="k">bit</span>] <span class="k">NULL</span> <span class="k">CONSTRAINT</span> [DF_up6_files_f_deleted]  <span class="k">DEFAULT</span> ((<span class="n">0</span>)),</div>
<div class="code" style="top:332.6px;left:6px">    [f_scan] [<span class="k">bit</span>] <span class="k">NOT</span> <span class="k">NULL</span> <span class="k">CONSTRAINT</span> [DF_up6_files_f_scan]  <span class="k">DEFAULT</span> ((<span class="n">0</span>)),</div>
<div class="code" style="top:347.6px;left:6px">    [f_encrypt]    [<span class="k">bit</span>] <span class="k">NULL</span> <span class="k">default</span> (<span class="n">0</span>),</div>
<div class="code" style="top:362.6px;left:6px">    [f_encryptAgo] [nvarchar](<span class="n">7</span>) <span class="k">default</span> <span class="s">'aes'</span>,<span class="c">/*<span class="cj">加</span><span class="cj">密</span><span class="cj">算</span><span class="cj">法</span>: aes,sm4*/</span></div>
<div class="code" style="top:377.6px;left:6px">    [f_blockSize]  [<span class="k">int</span>] <span class="k">NULL</span> <span class="k">default</span> (<span class="n">0</span>),<span class="c">/*<span class="cj">块</span><span class="cj">大</span><span class="cj">小</span>*/</span></div>
<div class="code" style="top:392.6px;left:6px">    [f_blockSizeSec] [<span class="k">int</span>] <span class="k">default</span> <span class="n">0</span>,<span class="c">/*<span class="cj">块</span><span class="cj">加</span><span class="cj">密</span><span class="cj">大</span><span class="cj">小</span>*/</span></div>
<div class="code" style="top:407.6px;left:6px">    [f_object_key]   [nvarchar](<span class="n">512</span>) <span class="k">default</span>(<span class="s">''</span>)</div>
<div class="code" style="top:422.6px;left:6px"> <span class="k">CONSTRAINT</span> [PK_up6_files_1] <span class="k">PRIMARY</span> <span class="k">KEY</span> CLUSTERED</div>
<div class="code" style="top:437.6px;left:6px">(</div>
<div class="code" style="top:452.6px;left:6px">    [f_id] <span class="k">ASC</span></div>
<div class="code" style="top:467.6px;left:6px">)<span class="k">WITH</span> (IGNORE_DUP_KEY = <span class="k">OFF</span>) <span class="k">ON</span> [<span class="k">PRIMARY</span>]</div>
<div class="code" style="top:482.6px;left:6px">) <span class="k">ON</span> [<span class="k">PRIMARY</span>]</div>
<div class="code" style="top:497.6px;left:6px"></div>
<div class="code" style="top:512.6px;left:6px"><span class="k">SET</span> ANSI_PADDING <span class="k">OFF</span></div>
<div class="code" style="top:527.6px;left:6px"></div>
<div class="code" style="top:542.6px;left:6px">EXEC sys.sp_addextendedproperty @<span class="k">name</span>=<span class="s">N'MS_Description'</span>, @<span class="k">value</span>=<span class="s">N'<span class="cj">文</span><span class="cj">件</span><span class="cj">唯</span><span class="cj">一</span>GUID,<span class="cj">由</span><span class="cj">控</span><span class="cj">件</span><span class="cj">生</span><span class="cj">成</span>'</span> ,@level0type=<span class="s">N'SCHEMA'</span></div>
<div class="code" style="top:557.6px;left:6px"></div>
<div class="code" style="top:572.6px;left:6px">EXEC sys.sp_addextendedproperty @<span class="k">name</span>=<span class="s">N'MS_Description'</span>, @<span class="k">value</span>=<span class="s">N'<span class="cj">父</span><span class="cj">级</span><span class="cj">文</span><span class="cj">件</span><span class="cj">夹</span>ID'</span> ,@level0type=<span class="s">N'SCHEMA'</span></div>
<div class="code" style="top:587.6px;left:6px"></div>
<div class="code" style="top:602.6px;left:6px">EXEC sys.sp_addextendedproperty @<span class="k">name</span>=<span class="s">N'MS_Description'</span>, @<span class="k">value</span>=<span class="s">N'<span class="cj">根</span><span class="cj">级</span><span class="cj">文</span><span class="cj">件</span><span class="cj">夹</span>ID'</span> ,@level0type=<span class="s">N'SCHEMA'</span></div>
</div></div>
<div style="position:absolute;left:432px;top:98px;width:8px;height:2px;background:#e39a7e;border-radius:1px"></div>
<div style="position:absolute;left:447px;top:578px;width:7px;height:2px;background:#e39a7e;border-radius:1px"></div>
<div style="position:absolute;left:459px;top:608px;width:7px;height:2px;background:#e39a7e;border-radius:1px"></div>
<svg style="position:absolute;left:365px;top:385px;" width="12" height="15" viewBox="0 0 12 15"><path d="M6 0.5a5 5 0 0 1 3 9v1.5H3V9.5a5 5 0 0 1 3-9z" fill="#f2a60d"/><rect x="3.5" y="12" width="5" height="1" fill="#a8a8a8"/><rect x="4" y="13.7" width="4" height="1" fill="#a8a8a8"/></svg>
<svg style="position:absolute;left:346px;top:90px;" width="9" height="11" viewBox="0 0 9 11"><path d="M0.5 0.5h8v6l-4 4-4-4z" fill="#e9f3e9" stroke="#c4d6c4" stroke-width="1"/></svg>
<svg style="position:absolute;left:346px;top:569px;" width="9" height="11" viewBox="0 0 9 11"><path d="M0.5 10.5h8v-6l-4-4-4 4z" fill="#e9f3e9" stroke="#c4d6c4" stroke-width="1"/></svg>
<svg style="position:absolute;left:347px;top:600px;" width="9" height="11" viewBox="0 0 9 11"><path d="M0.5 0.5h8v6l-4 4-4-4z" fill="#e9f3e9" stroke="#c4d6c4" stroke-width="1"/></svg>
<div style="position:absolute;left:978px;top:102px;width:10px;height:255px;background:rgba(100,120,100,0.18);"></div>
<svg style="position:absolute;left:977px;top:86px;" width="11" height="11" viewBox="0 0 11 11"><circle cx="5.5" cy="5.5" r="5" fill="#db5c5c"/><rect x="4.6" y="2.2" width="1.8" height="4.2" fill="#fff"/><rect x="4.6" y="7.4" width="1.8" height="1.6" fill="#fff"/></svg>
<div style="position:absolute;left:975px;top:101px;width:13px;height:2px;background:#c87a5a;"></div>
<div style="position:absolute;left:975px;top:303px;width:13px;height:2px;background:#c87a5a;"></div>
<div style="position:absolute;left:975px;top:316px;width:13px;height:2px;background:#c87a5a;"></div>
<div style="position:absolute;left:356px;top:685px;width:257px;height:11px;background:rgba(100,120,100,0.18);"></div>
<div style="position:absolute;left:298px;top:696px;width:691px;height:22px;background:#f0f0f0;"></div>
<div style="position:absolute;left:298px;top:696px;width:691px;height:1px;background:#e2e2e2;"></div>
<svg style="position:absolute;left:361px;top:701px;" width="15" height="13" viewBox="0 0 15 13"><rect x="0" y="0" width="15" height="13" rx="1" fill="#b4bcc2"/><path d="M1 4h13M1 7h13M1 10h13M5 4v8M10 4v8" stroke="#f0f0f0" stroke-width="1"/></svg>
<div style="position:absolute;left:989px;top:58px;width:21px;height:660px;background:#f2f2f2;"></div>
<div style="position:absolute;left:988px;top:58px;width:1px;height:660px;background:#d9d9d9;"></div>
<svg style="position:absolute;left:993px;top:67px;" width="13" height="15" viewBox="0 0 13 15"><path d="M1 3c0-3 11-3 11 0v9c0 3-11 3-11 0z" fill="#6e6e6e"/><path d="M1 3.2c0 2.4 11 2.4 11 0M1 6.6c0 2.4 11 2.4 11 0M1 10c0 2.4 11 2.4 11 0" stroke="#f2f2f2" stroke-width="0.9" fill="none"/></svg>
<div style="position:absolute;left:1000px;top:108px;width:0;height:0"><div style="position:absolute;left:0;top:0;transform:translate(-50%,-50%) rotate(90deg);white-space:pre;font-size:11px;line-height:14px;color:#000">Database</div></div>
<svg style="position:absolute;left:993px;top:150px;" width="13" height="14" viewBox="0 0 13 14"><ellipse cx="6.5" cy="9" rx="3" ry="4" fill="#6e6e6e"/><circle cx="6.5" cy="3.5" r="2" fill="#6e6e6e"/><path d="M1 5l4 2M12 5l-4 2M0.5 9h4M12.5 9h-4M1 13l4-2M12 13l-4-2" stroke="#6e6e6e" stroke-width="1"/></svg>
<div style="position:absolute;left:1000px;top:176px;width:0;height:0"><div style="position:absolute;left:0;top:0;transform:translate(-50%,-50%) rotate(90deg);white-space:pre;font-size:11.5px;line-height:14px;color:#000">Ant</div></div>
<svg style="position:absolute;left:991px;top:204px;" width="18" height="13" viewBox="0 0 18 13"><text x="0" y="12" font-family="Liberation Sans" font-size="15" font-weight="bold" font-style="italic" fill="#6e6e6e">m</text></svg>
<div style="position:absolute;left:1000px;top:241px;width:0;height:0"><div style="position:absolute;left:0;top:0;transform:translate(-50%,-50%) rotate(90deg);white-space:pre;font-size:11px;line-height:14px;color:#000">Maven</div></div>
<div style="position:absolute;left:1px;top:718px;width:1009px;height:1px;background:#d4d4d4;"></div>
<div style="position:absolute;left:1px;top:719px;width:1009px;height:21px;background:#f2f2f2;"></div>
<div style="position:absolute;left:1px;top:740px;width:1009px;height:1px;background:#c9c9c9;"></div>
<svg style="position:absolute;left:34px;top:725px;" width="11" height="10" viewBox="0 0 11 10"><rect x="0" y="0" width="2" height="2" fill="#6e6e6e"/><rect x="3" y="0" width="8" height="2" fill="#6e6e6e"/><rect x="0" y="4" width="2" height="2" fill="#6e6e6e"/><rect x="3" y="4" width="8" height="2" fill="#6e6e6e"/><rect x="0" y="8" width="2" height="2" fill="#6e6e6e"/><rect x="3" y="8" width="8" height="2" fill="#6e6e6e"/></svg>
<div class="t" style="left:50px;top:724px;font-size:11px;color:#000;font-weight:normal;"><u>6</u>: TODO</div>
<svg style="position:absolute;left:117px;top:724px;" width="11" height="12" viewBox="0 0 11 12"><path d="M1.5 0v12" stroke="#6e6e6e" stroke-width="1.5"/><path d="M1.5 9h6V4" stroke="#6e6e6e" stroke-width="1.5" fill="none"/><path d="M4.5 5L7.5 1.5 10.5 5z" fill="#6e6e6e"/></svg>
<div class="t" style="left:132px;top:724px;font-size:11px;color:#000;font-weight:normal;"><u>9</u>: Version Control</div>
<svg style="position:absolute;left:243px;top:724px;" width="14" height="12" viewBox="0 0 14 12"><path d="M0.8 11.2C1 6 5 1.8 13.2 1c.6 5.5-2.5 9.6-7.6 10.4-2 .3-3.6.3-4.8-.2z" fill="#858585"/><path d="M2.5 10C5 7.5 7.5 5.5 10.5 4" stroke="#f2f2f2" stroke-width="0.8" fill="none"/></svg>
<div class="t" style="left:261px;top:724px;font-size:11px;color:#000;font-weight:normal;">Spring</div>
<svg style="position:absolute;left:314px;top:725px;" width="11" height="10" viewBox="0 0 11 10"><rect x="0" y="0" width="11" height="10" fill="#6e6e6e"/><path d="M2 2.5l2.5 2-2.5 2" stroke="#f2f2f2" stroke-width="1" fill="none"/><path d="M5.5 7.5h3.5" stroke="#f2f2f2" stroke-width="1"/></svg>
<div class="t" style="left:330px;top:724px;font-size:11px;color:#000;font-weight:normal;">Terminal</div>
<svg style="position:absolute;left:391px;top:723px;" width="16" height="14" viewBox="0 0 16 14"><path d="M1.5 5.5L7.5 1.5" stroke="#6e6e6e" stroke-width="2.6" stroke-linecap="round"/><path d="M4.5 3.5L12.5 11.5" stroke="#6e6e6e" stroke-width="2.4"/></svg>
<div class="t" style="left:408px;top:724px;font-size:11px;color:#000;font-weight:normal;">Build</div>
<svg style="position:absolute;left:454px;top:724px;" width="12" height="12" viewBox="0 0 12 12"><rect x="0" y="1" width="10" height="10" fill="#8c8c8c"/><rect x="3" y="4" width="9" height="8" fill="#f2f2f2"/><rect x="4" y="5" width="7" height="6" fill="#8c8c8c"/><path d="M6 6v4M9 6v4" stroke="#f2f2f2" stroke-width="1"/></svg>
<div class="t" style="left:469px;top:724px;font-size:11px;color:#000;font-weight:normal;letter-spacing:-0.2px">Java Enterprise</div>
<svg style="position:absolute;left:912px;top:725px;" width="13" height="12" viewBox="0 0 13 12"><path d="M6.5 0.7c3.3 0 5.8 2.3 5.8 5.2v5.4H6.5C3.2 11.3 0.7 9 0.7 6S3.2 0.7 6.5 0.7z" fill="none" stroke="#6e6e6e" stroke-width="1.2"/></svg>
<div class="t" style="left:929px;top:724px;font-size:11px;color:#000;font-weight:normal;">Event Log</div>
<div style="position:absolute;left:1px;top:741px;width:1009px;height:20px;background:#f2f2f2;"></div>
<svg style="position:absolute;left:6px;top:744px;" width="14" height="14" viewBox="0 0 14 14"><rect x="3.5" y="0.5" width="10" height="10" fill="none" stroke="#8c8c8c"/><path d="M0.5 3.5v10h10" fill="none" stroke="#8c8c8c"/></svg>
<div class="t" style="left:700px;top:743px;font-size:12.5px;color:#000;font-weight:normal;">22:41</div>
<div class="t" style="left:744px;top:743px;font-size:12.5px;color:#000;font-weight:normal;">CRLF</div>
<div class="t" style="left:785px;top:743px;font-size:12.5px;color:#000;font-weight:normal;">UTF-8</div>
<div class="t" style="left:831px;top:743px;font-size:12.5px;color:#000;font-weight:normal;">4 spaces</div>
<div class="t" style="left:892px;top:743px;font-size:12.5px;color:#000;font-weight:normal;">Git: 6.5.39</div>
<svg style="position:absolute;left:961px;top:745px;" width="13" height="12" viewBox="0 0 13 12"><path d="M2 5V3.5a2.5 2.5 0 0 1 5 0" stroke="#6e6e6e" stroke-width="1.4" fill="none"/><rect x="4" y="5" width="8" height="6" fill="#6e6e6e"/></svg>
<svg style="position:absolute;left:986px;top:743px;" width="13" height="15" viewBox="0 0 13 15"><path d="M0.5 5.2h12" stroke="#6e6e6e" stroke-width="1.4"/><path d="M3 5V1.5c0-.6.4-1 1-1h5c.6 0 1 .4 1 1V5z" fill="#6e6e6e"/><circle cx="6.5" cy="8.3" r="3" fill="#d9d9d9" stroke="#6e6e6e" stroke-width="0.9"/><path d="M5 8h1M7.2 8h1" stroke="#6e6e6e" stroke-width="0.9"/><path d="M1.5 14.5c.5-2 2.5-2.8 5-2.8s4.5.8 5 2.8z" fill="#6e6e6e"/></svg>
</body></html>
